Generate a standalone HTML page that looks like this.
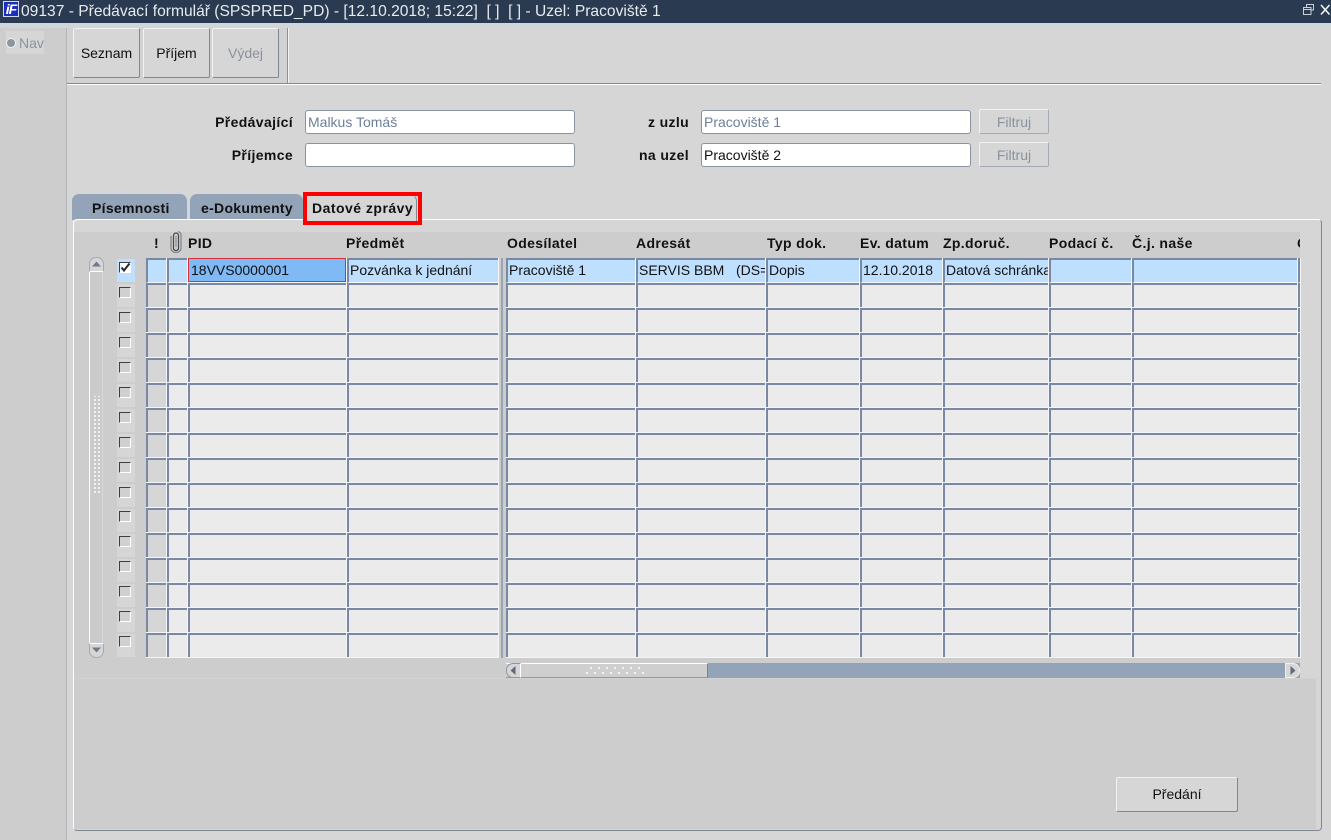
<!DOCTYPE html>
<html lang="cs">
<head>
<meta charset="utf-8">
<title>09137</title>
<style>
html,body{margin:0;padding:0;width:1331px;height:840px;overflow:hidden;background:#d6d6d6;font-family:"Liberation Sans",Arial,sans-serif;font-size:14px;color:#111}
div,span{position:absolute;box-sizing:border-box;white-space:nowrap}
svg{position:absolute}
.btn{background:#d6d6d6;border:1px solid;border-color:#f2f2f2 #7f8794 #7f8794 #f2f2f2;border-radius:2px;text-align:center}
.dis{color:#8a929c}
.lab{font-weight:bold;text-align:right;line-height:16px;height:16px;letter-spacing:.36px}
.inp{background:#fff;border:1px solid #8a93a1;border-radius:3px;height:24px;line-height:22px;padding-left:2px}
.tab{top:194px;height:26px;background:#93a3b8;border-radius:7px 7px 0 0;font-weight:bold;line-height:29px;letter-spacing:.3px}
.hd{top:235px;font-weight:bold;line-height:16px;height:16px;letter-spacing:.35px}
.col{top:258px;height:400px;background:linear-gradient(#7a89a3 0,#7a89a3 2px,transparent 2px,transparent 24px,#f4f5f6 24px,#f4f5f6 25px) 0 0/100% 25px,linear-gradient(90deg,#7a89a3 0,#7a89a3 2px,transparent 2px) 0 0,#ebebeb;box-shadow:1px 0 0 #f4f5f6}
.g{background:linear-gradient(#7a89a3 0,#7a89a3 2px,transparent 2px,transparent 24px,#f4f5f6 24px,#f4f5f6 25px) 0 0/100% 25px,linear-gradient(90deg,#7a89a3 0,#7a89a3 2px,transparent 2px) 0 0,#d6d6d6}
.r1{top:258px;height:25px;background:#bfdfff;border-top:2px solid #7a89a3;border-left:2px solid #7a89a3;border-bottom:1px solid #f4f5f6;line-height:21px;padding-left:1px}
.cbb{left:117px;width:18px;height:23px;background:#d6d6d6}
.cb{left:119px;width:12px;height:11px;border:1px solid;border-color:#3c3f44 #fff #fff #3c3f44;background:#d0d0d0}
</style>
</head>
<body>

<div style="left:0;top:0;width:1331px;height:23px;background:#2a3a50"></div>
<div style="left:0;top:23px;width:1331px;height:5px;background:#d0d6d9"></div>
<div style="left:3px;top:1px;width:16px;height:16px;background:#1c2fb8;color:#fff;font:italic bold 14px/15px 'Liberation Sans',sans-serif;text-align:center;border:1px solid #cfd6ff;letter-spacing:-1px">iF</div>
<div style="left:21px;top:2px;height:19px;line-height:19px;font-size:15.6px;color:#e6ebef">09137 - Předávací formulář (SPSPRED_PD) - [12.10.2018; 15:22]&nbsp; [ ]&nbsp; [ ] - Uzel: Pracoviště 1</div>
<svg style="left:1303px;top:4px" width="12" height="12" viewBox="0 0 12 12" fill="none" stroke="#c9d1d9" stroke-width="1"><path d="M3.5 3V.5H10.5V6H8"/><path d="M.5 3.5H8V10.5H.5Z"/><path d="M.5 5.5H8"/></svg>
<svg style="left:1320px;top:4px" width="11" height="12" viewBox="0 0 11 12" fill="none" stroke="#f2f4f6" stroke-width="1.6"><path d="M1 1L9.5 10.5M9.5 1L1 10.5"/></svg>

<div style="left:0;top:28px;width:67px;height:812px;background:#cdcdcd;border-right:1px solid #b4b7ba"></div>
<div style="left:6px;top:31px;width:38px;height:23px;background:#d6d6d6"></div>
<div style="left:6px;top:38px;width:10px;height:10px;border-radius:50%;background:#8d959f;border:1px solid #eef0f2"></div>
<div style="left:19px;top:35px;line-height:16px;color:#8a92a0">Nav</div>

<div style="left:67px;top:28px;width:221px;height:55px;background:#d2d2d2"></div>
<div style="left:287px;top:28px;width:1px;height:55px;background:#8d9094"></div>
<div style="left:288px;top:28px;width:1px;height:55px;background:#f2f2f2"></div>
<div class="btn" style="left:73px;top:28px;width:67px;height:50px;line-height:48px">Seznam</div>
<div class="btn" style="left:143px;top:28px;width:67px;height:50px;line-height:48px">Příjem</div>
<div class="btn dis" style="left:212px;top:28px;width:67px;height:50px;line-height:48px">Výdej</div>
<div style="left:67px;top:83px;width:1254px;height:1px;background:#85888c"></div>
<div style="left:67px;top:84px;width:1254px;height:1px;background:#fff"></div>

<div class="lab" style="left:193px;top:114px;width:100px">Předávající</div>
<div class="lab" style="left:193px;top:147px;width:100px">Příjemce</div>
<div class="lab" style="left:589px;top:114px;width:100px">z uzlu</div>
<div class="lab" style="left:589px;top:147px;width:100px">na uzel</div>
<div class="inp" style="left:305px;top:110px;width:270px;color:#6d7f99">Malkus Tomáš</div>
<div class="inp" style="left:305px;top:143px;width:270px"></div>
<div class="inp" style="left:701px;top:110px;width:270px;color:#6d7f99">Pracoviště 1</div>
<div class="inp" style="left:701px;top:143px;width:270px">Pracoviště 2</div>
<div class="btn dis" style="left:979px;top:109px;width:70px;height:25px;line-height:24px;border-color:#f2f2f2 #a5abb4 #a5abb4 #f2f2f2">Filtruj</div>
<div class="btn dis" style="left:979px;top:142px;width:70px;height:25px;line-height:24px;border-color:#f2f2f2 #a5abb4 #a5abb4 #f2f2f2">Filtruj</div>

<div class="tab" style="left:72px;width:115px;padding-left:20px">Písemnosti</div>
<div class="tab" style="left:190px;width:113px;padding-left:11px">e-Dokumenty</div>
<div style="left:73px;top:219px;width:1249px;height:612px;background:#d6d6d6;border:1px solid;border-color:#fff #7f8794 #7f8794 #fff;border-radius:4px"></div>
<div style="left:304px;top:194px;width:113px;height:28px;background:#d6d6d6;border-radius:7px 7px 0 0;border-right:1px solid #7f8794;border-top:1px solid #f2f2f2;font-weight:bold;padding-left:8px;line-height:27px;letter-spacing:.48px">Datové zprávy</div>
<div style="left:303px;top:192px;width:119px;height:33px;border:4px solid #f00"></div>

<div style="left:74px;top:232px;width:1226px;height:446px;background:#cdcdcd"></div>
<div style="left:74px;top:678px;width:1243px;height:1px;background:#d2d2d2"></div>
<div style="left:74px;top:679px;width:1242px;height:150px;background:#cdcdcd"></div>

<div class="hd" style="left:154px">!</div>
<svg style="left:169px;top:231px" width="14" height="22" viewBox="0 0 14 22" fill="none" stroke="#44484d" stroke-width="1.2"><path d="M4.5 5V17C4.5 18.5 5.5 19.5 7 19.5S9.5 18.5 9.5 17V5C9.5 3 8.5 2 7 2S4.5 3 4.5 5"/><path d="M2 5V17C2 19.5 4 21.5 7 21.5S12 19.5 12 17V4C12 2.5 11 .8 9 .6" stroke="#7c8188"/><path d="M7 5V16" stroke="#8a8f96"/></svg>
<div class="hd" style="left:188px">PID</div>
<div class="hd" style="left:346px">Předmět</div>
<div class="hd" style="left:507px">Odesílatel</div>
<div class="hd" style="left:636px">Adresát</div>
<div class="hd" style="left:767px">Typ dok.</div>
<div class="hd" style="left:860px">Ev. datum</div>
<div class="hd" style="left:943px">Zp.doruč.</div>
<div class="hd" style="left:1049px">Podací č.</div>
<div class="hd" style="left:1132px">Č.j. naše</div>
<div style="left:1297px;top:235px;width:3px;height:16px;overflow:hidden;font-weight:bold;line-height:16px">Č</div>

<div class="col g" style="left:146px;width:20px"></div>
<div class="col" style="left:167px;width:20px"></div>
<div class="col" style="left:188px;width:158px"></div>
<div class="col" style="left:347px;width:151px"></div>
<div style="left:501px;top:258px;width:2px;height:400px;background:#9aa3b0"></div>
<div class="col" style="left:506px;width:129px"></div>
<div class="col" style="left:636px;width:129px"></div>
<div class="col" style="left:766px;width:93px"></div>
<div class="col" style="left:860px;width:82px"></div>
<div class="col" style="left:943px;width:105px"></div>
<div class="col" style="left:1049px;width:82px"></div>
<div class="col" style="left:1132px;width:165px"></div>
<div class="col" style="left:1298px;width:2px"></div>

<div class="r1" style="left:146px;width:20px"></div>
<div class="r1" style="left:167px;width:20px"></div>
<div class="r1" style="left:347px;width:151px">Pozvánka k jednání</div>
<div class="r1" style="left:506px;width:129px">Pracoviště 1</div>
<div class="r1" style="left:636px;width:129px;overflow:hidden">SERVIS BBM&nbsp;&nbsp; (DS=</div>
<div class="r1" style="left:766px;width:93px">Dopis</div>
<div class="r1" style="left:860px;width:82px">12.10.2018</div>
<div class="r1" style="left:943px;width:105px;overflow:hidden">Datová schránka</div>
<div class="r1" style="left:1049px;width:82px"></div>
<div class="r1" style="left:1132px;width:165px"></div>
<div class="r1" style="left:1298px;width:2px;padding:0"></div>
<div style="left:188px;top:258px;width:158px;height:24px;background:#7fb9f6;border:1px solid #d3303a;line-height:22px;padding-left:2px">18VVS0000001</div>

<div class="cbb" style="top:259px;background:#bfdfff"></div>
<div class="cb" style="top:262px;background:#fff"></div>
<svg style="left:120px;top:262px" width="12" height="11" viewBox="0 0 12 11" fill="none" stroke="#24272b" stroke-width="2"><path d="M1.5 5.5L4 8.5L9.5 1.5"/></svg>
<div class="cbb" style="top:284px"></div><div class="cb" style="top:287px"></div>
<div class="cbb" style="top:309px"></div><div class="cb" style="top:312px"></div>
<div class="cbb" style="top:334px"></div><div class="cb" style="top:337px"></div>
<div class="cbb" style="top:359px"></div><div class="cb" style="top:362px"></div>
<div class="cbb" style="top:384px"></div><div class="cb" style="top:387px"></div>
<div class="cbb" style="top:409px"></div><div class="cb" style="top:412px"></div>
<div class="cbb" style="top:434px"></div><div class="cb" style="top:437px"></div>
<div class="cbb" style="top:459px"></div><div class="cb" style="top:462px"></div>
<div class="cbb" style="top:484px"></div><div class="cb" style="top:487px"></div>
<div class="cbb" style="top:509px"></div><div class="cb" style="top:511px"></div>
<div class="cbb" style="top:534px"></div><div class="cb" style="top:536px"></div>
<div class="cbb" style="top:559px"></div><div class="cb" style="top:561px"></div>
<div class="cbb" style="top:584px"></div><div class="cb" style="top:586px"></div>
<div class="cbb" style="top:609px"></div><div class="cb" style="top:611px"></div>
<div class="cbb" style="top:634px"></div><div class="cb" style="top:636px"></div>

<!-- vertical scrollbar -->
<div style="left:89px;top:270px;width:14px;height:375px;background:#cbcbcb;border-left:1px solid #fff;border-right:1px solid #d8d8d8"></div>
<div style="left:89px;top:257px;width:15px;height:15px;background:#d6d6d6;border:1px solid #a3abb6;border-bottom-color:#fff;border-radius:7px 7px 0 0"></div>
<svg style="left:92px;top:261px" width="9" height="6"><path d="M0 5.5H9L4.5 .5Z" fill="#6f7a8a"/></svg>
<div style="left:89px;top:643px;width:15px;height:15px;background:#d6d6d6;border:1px solid #a3abb6;border-top-color:#fff;border-radius:0 0 7px 7px"></div>
<svg style="left:92px;top:647px" width="9" height="6"><path d="M0 .5H9L4.5 5.5Z" fill="#6f7a8a"/></svg>
<div style="left:93px;top:396px;width:8px;height:98px;background:radial-gradient(circle,#f4f4f4 1px,transparent 1.2px) 0 0/4px 8px,radial-gradient(circle,#f4f4f4 1px,transparent 1.2px) 4px 4px/4px 8px"></div>

<!-- horizontal scrollbar -->
<div style="left:506px;top:663px;width:794px;height:15px;background:#93a3b8"></div>
<div style="left:506px;top:663px;width:202px;height:15px;background:#cfcfcf;border-top:1px solid #fff;border-bottom:1px solid #8f98a6;border-right:1px solid #76839a"></div>
<div style="left:506px;top:663px;width:15px;height:15px;background:#d6d6d6;border:1px solid #8f98a6;border-right-color:#fff;border-radius:7px 0 0 7px"></div>
<svg style="left:510px;top:666px" width="6" height="9"><path d="M5.5 0V9L.5 4.5Z" fill="#5f6a7a"/></svg>
<div style="left:1285px;top:663px;width:15px;height:15px;background:#d6d6d6;border:1px solid #f0f0f0;border-radius:0 7px 7px 0"></div>
<svg style="left:1290px;top:666px" width="6" height="9"><path d="M.5 0V9L5.5 4.5Z" fill="#5f6a7a"/></svg>
<div style="left:590px;top:667px;width:56px;height:2px;background:repeating-linear-gradient(90deg,#f4f4f4 0,#f4f4f4 2px,transparent 2px,transparent 8px)"></div>
<div style="left:586px;top:672px;width:60px;height:2px;background:repeating-linear-gradient(90deg,#f4f4f4 0,#f4f4f4 2px,transparent 2px,transparent 8px)"></div>

<div class="btn" style="left:1116px;top:777px;width:122px;height:35px;line-height:33px">Předání</div>

</body>
</html>
